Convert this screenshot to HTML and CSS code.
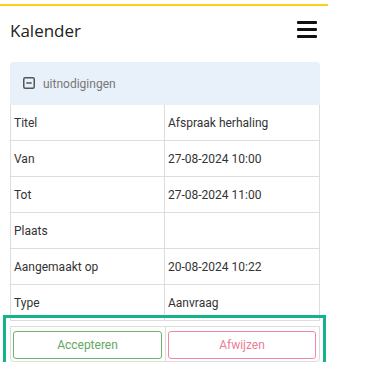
FILE: index.html
```html
<!DOCTYPE html>
<html lang="nl">
<head>
    <meta charset="UTF-8">
    <meta name="viewport" content="width=device-width, initial-scale=1.0">
    <title>Kalender</title>
    <link rel="stylesheet" href="styles.css">
</head>
<body>
    <div class="page">
        <div class="top-line"></div>

        <div class="header">
            <h1>Kalender</h1>
            <button class="menu-btn" aria-label="Menu">
                <span></span><span></span><span></span>
            </button>
        </div>

        <div class="panel">
            <div class="panel-head">
                <svg class="toggle-icon" width="12" height="12" viewBox="0 0 12 12">
                    <rect x="0.75" y="0.75" width="10.5" height="10.5" rx="1.5" fill="none" stroke="#555" stroke-width="1.5"/>
                    <line x1="3.3" y1="6" x2="8.7" y2="6" stroke="#555" stroke-width="1.5"/>
                </svg>
                <span>uitnodigingen</span>
            </div>

            <table class="detail-table">
                <tr><td>Titel</td><td>Afspraak herhaling</td></tr>
                <tr><td>Van</td><td>27-08-2024 10:00</td></tr>
                <tr><td>Tot</td><td>27-08-2024 11:00</td></tr>
                <tr><td>Plaats</td><td></td></tr>
                <tr><td>Aangemaakt op</td><td>20-08-2024 10:22</td></tr>
                <tr><td>Type</td><td>Aanvraag</td></tr>
            </table>

            <div class="actions">
                <div class="actions-box">
                    <div class="action-cell">
                        <button class="btn btn-accept">Accepteren</button>
                    </div>
                    <div class="action-cell">
                        <button class="btn btn-decline">Afwijzen</button>
                    </div>
                </div>
                <div class="highlight"></div>
            </div>
        </div>
    </div>
</body>
</html>
```

FILE: styles.css
```css
* {
    box-sizing: border-box;
    margin: 0;
    padding: 0;
}

body {
    background-color: #fff;
    color: #333;
    font-family: Roboto, 'Liberation Sans', Arial, sans-serif;
}

.page {
    width: 328px;
}

.top-line {
    margin-top: 4px;
    height: 2px;
    background-color: #fcd116;
}

.header {
    display: flex;
    justify-content: space-between;
    align-items: center;
    height: 48px;
    padding: 0 11px 0 10px;
}

h1 {
    font-family: 'Open Sans', 'Noto Sans', sans-serif;
    font-size: 17px;
    font-weight: 400;
    color: #222;
}

.menu-btn {
    display: flex;
    flex-direction: column;
    gap: 4px;
    width: 20px;
    background: none;
    border: none;
    cursor: pointer;
    margin-top: -1px;
}

.menu-btn span {
    display: block;
    height: 3px;
    background-color: #111;
    border-radius: 1px;
}

.panel {
    margin: 8px 8px 0 10px;
}

.panel-head {
    display: flex;
    align-items: center;
    gap: 8px;
    height: 43px;
    padding-left: 13px;
    background-color: #e8f0fa;
    border-radius: 4px 4px 0 0;
    font-size: 12px;
    color: #777;
}

.toggle-icon {
    flex-shrink: 0;
    margin-top: -2px;
}

.detail-table {
    width: 100%;
    table-layout: fixed;
    border-collapse: separate;
    border-spacing: 0;
    font-size: 12px;
    color: #333;
}

.detail-table td {
    width: 50%;
    height: 36px;
    padding: 0 3px;
    border-bottom: 1px solid #ddd;
    border-right: 1px solid #ddd;
    vertical-align: middle;
}

.detail-table td:first-child {
    border-left: 1px solid #ddd;
}

.actions {
    position: relative;
    padding-top: 5px;
}

.actions-box {
    display: grid;
    grid-template-columns: 155px 1fr;
    border: 1px solid #ddd;
    border-radius: 0 0 4px 4px;
    box-shadow: 0 1px 2px rgba(0,0,0,0.06);
}

.action-cell {
    padding: 4px 3px 2px 2px;
}

.action-cell:first-child {
    border-right: 1px solid #ddd;
}

.btn {
    display: block;
    width: 100%;
    height: 28px;
    background-color: #fff;
    border-radius: 3px;
    font-family: Roboto, 'Liberation Sans', Arial, sans-serif;
    font-size: 12px;
    cursor: pointer;
}

.btn-accept {
    border: 1px solid #6cb46a;
    color: #64a864;
}

.btn-decline {
    border: 1px solid #ef8aa3;
    color: #ec7d97;
}

.highlight {
    position: absolute;
    top: -6px;
    left: -7px;
    right: -6px;
    bottom: -7px;
    border: 3px solid #13b38e;
    pointer-events: none;
}
```
